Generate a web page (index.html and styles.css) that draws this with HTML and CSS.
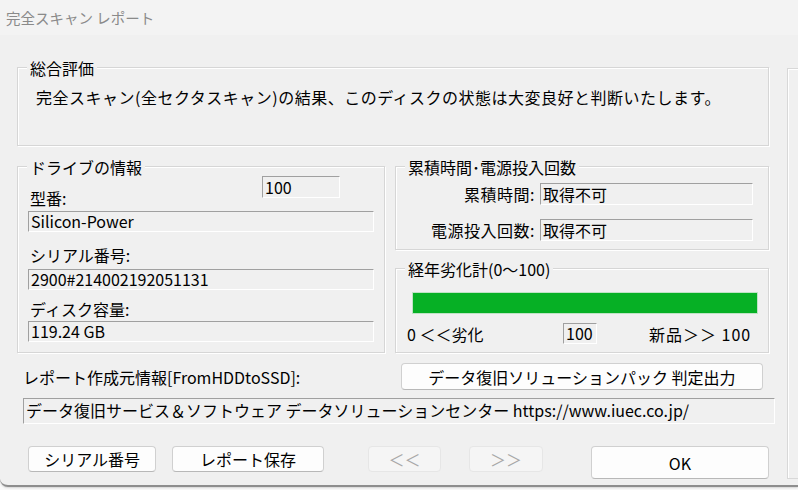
FILE: index.html
```html
<!DOCTYPE html>
<html lang="ja">
<head>
<meta charset="utf-8">
<title>完全スキャン レポート</title>
<link rel="stylesheet" href="styles.css">
</head>
<body>
<div class="window">
  <div class="titlebar">完全スキャン レポート</div>
  <div class="client">
    <div class="main">
      <div class="group summary">
        <div class="legend">総合評価</div>
        <div class="summary-text">完全スキャン(全セクタスキャン)の結果、このディスクの状態は大変良好と判断いたします。</div>
      </div>

      <div class="middle">
        <div class="group drive">
          <div class="legend">ドライブの情報</div>
          <div class="model-row">
            <span class="label">型番:</span>
            <span class="field small-box">100</span>
          </div>
          <div class="field wide">Silicon-Power</div>
          <div class="label gap-serial">シリアル番号:</div>
          <div class="field wide">2900#214002192051131</div>
          <div class="label gap-cap">ディスク容量:</div>
          <div class="field wide">119.24 GB</div>
        </div>

        <div class="right-col">
          <div class="group hours">
            <div class="legend">累積時間･電源投入回数</div>
            <div class="kv first">
              <span class="kv-label">累積時間:</span>
              <span class="field kv-field">取得不可</span>
            </div>
            <div class="kv second">
              <span class="kv-label">電源投入回数:</span>
              <span class="field kv-field">取得不可</span>
            </div>
          </div>
          <div class="group aging">
            <div class="legend">経年劣化計(0～100)</div>
            <div class="bar"><div class="bar-fill" style="width:100%"></div></div>
            <div class="scale">
              <span class="scale-low">0 ＜＜劣化</span>
              <span class="field scale-box">100</span>
              <span class="scale-high">新品＞＞ 100</span>
            </div>
          </div>
        </div>
      </div>

      <div class="source-row">
        <span class="source-label">レポート作成元情報[FromHDDtoSSD]:</span>
        <button class="btn judge">データ復旧ソリューションパック 判定出力</button>
      </div>
      <div class="field source-field">データ復旧サービス＆ソフトウェア データソリューションセンター https://www.iuec.co.jp/</div>

      <div class="buttons">
        <button class="btn b-serial">シリアル番号</button>
        <button class="btn b-save">レポート保存</button>
        <button class="btn b-prev" disabled>＜＜</button>
        <button class="btn b-next" disabled>＞＞</button>
        <button class="btn b-ok">OK</button>
      </div>
    </div>
    <div class="side"></div>
  </div>
</div>
</body>
</html>
```

FILE: styles.css
```css
* { box-sizing: border-box; }
html { background: #f9f9f9; }
body {
  margin: 0;
  width: 798px;
  height: 490px;
  overflow: hidden;
  font-family: "Noto Sans CJK JP", "Liberation Sans", sans-serif;
  font-size: 16px;
  color: #000;
}
.window {
  height: 487px;
  background: #f0f0f0;
  border-bottom: 2px solid #8e8e8e;
  border-bottom-left-radius: 8px;
  box-shadow: 0 1px 2px rgba(0,0,0,0.15);
  overflow: hidden;
}
.titlebar {
  height: 35px;
  background: #f3f3f3;
  color: #8a8a8a;
  font-size: 14.5px;
  line-height: 35px;
  padding-left: 6px;
}
.client {
  display: flex;
}
.main {
  width: 752px;
  margin-left: 17px;
  margin-top: 32px;
  flex: none;
}
.side {
  flex: 1;
  margin-left: 18px;
  margin-top: 33px;
  height: 411px;
  border: 1px solid #d8d8d8;
  border-right: none;
  box-shadow: inset 1px 1px 0 #fff;
}
.group {
  border: 1px solid #d6d6d6;
  box-shadow: 1px 1px 0 #fff, inset 1px 1px 0 #fff;
}
.legend {
  margin: -10px 0 0 9px;
  padding: 0 3px;
  width: fit-content;
  background: #f0f0f0;
  line-height: 20px;
  white-space: nowrap;
}
.drive .legend {
  margin-left: -1px;
}
.summary {
  height: 79px;
}
.summary-text {
  margin-top: 9px;
  padding-left: 18px;
  line-height: 20px;
  letter-spacing: 0.5px;
  white-space: nowrap;
}
.middle {
  display: grid;
  grid-template-columns: 368px 374px;
  column-gap: 10px;
  margin-top: 20px;
}
.drive {
  height: 187px;
  padding: 0 10px;
}
.label {
  padding-left: 2px;
  line-height: 20px;
  white-space: nowrap;
}
.model-row {
  display: flex;
  height: 32px;
  margin-top: -1px;
}
.model-row .label {
  align-self: flex-end;
  width: 234px;
  padding-left: 2px;
}
.field {
  display: block;
  background: #f0f0f0;
  border-top: 1px solid #a0a0a0;
  border-left: 1px solid #a0a0a0;
  border-right: 1px solid #fff;
  border-bottom: 1px solid #fff;
  padding-left: 2px;
  white-space: nowrap;
}
.small-box {
  align-self: flex-start;
  width: 78px;
  height: 22px;
  line-height: 20px;
}
.wide {
  height: 21px;
  line-height: 19px;
  margin-top: 3px;
}
.gap-serial { margin-top: 13px; }
.gap-serial + .wide { margin-top: 4px; }
.gap-cap { margin-top: 9px; }
.gap-cap + .wide { margin-top: 2px; }

.right-col {
  display: flex;
  flex-direction: column;
}
.hours {
  height: 84px;
}
.kv {
  display: flex;
  align-items: center;
  height: 22px;
}
.kv.first { margin-top: 6px; }
.kv.second { margin-top: 14px; }
.kv-label {
  width: 139px;
  text-align: right;
  white-space: nowrap;
  letter-spacing: 0.5px;
}
.kv-field {
  margin-left: 5px;
  width: 213px;
  height: 22px;
  line-height: 20px;
}
.aging {
  margin-top: 18px;
  height: 85px;
}
.bar {
  margin: 13px 0 0 16px;
  width: 346px;
  height: 22px;
  border: 1px solid #bfe3c5;
  background: #e6e6e6;
}
.bar-fill {
  height: 100%;
  background: #06b025;
}
.scale {
  display: flex;
  align-items: center;
  height: 21px;
  margin-top: 9px;
  padding-left: 11px;
  white-space: nowrap;
}
.scale-low { width: 156px; }
.scale-box {
  width: 34px;
  height: 21px;
  line-height: 19px;
}
.scale-high { margin-left: 52px; letter-spacing: 1px; }

.source-row {
  display: flex;
  justify-content: space-between;
  align-items: center;
  margin-top: 10px;
  height: 27px;
}
.source-label {
  margin-left: 6px;
  white-space: nowrap;
}
.btn {
  font-family: "Noto Sans CJK JP", "Liberation Sans", sans-serif;
  font-size: 16px;
  color: #000;
  background: #fdfdfd;
  border: 1px solid #d0d0d0;
  border-bottom-color: #b8b8b8;
  border-radius: 4px;
  padding: 0;
  line-height: 20px;
  white-space: nowrap;
}
.btn:disabled {
  background: #f5f5f5;
  border-color: #e6e6e6;
  color: #a8a8a8;
}
.judge {
  width: 362px;
  height: 27px;
  margin-right: 6px;
}
.source-field {
  margin: 8px 0 0 6px;
  width: 752px;
  height: 26px;
  line-height: 23px;
}
.buttons {
  display: flex;
  align-items: flex-start;
  margin-top: 22px;
}
.buttons .btn { height: 26px; }
.b-serial { margin-left: 11px; width: 129px; }
.b-save { margin-left: 16px; width: 152px; }
.b-prev { margin-left: 44px; width: 74px; }
.b-next { margin-left: 28px; width: 74px; }
.b-ok { margin-left: 48px; width: 179px; }
.buttons .b-ok { height: 33px; }
```
